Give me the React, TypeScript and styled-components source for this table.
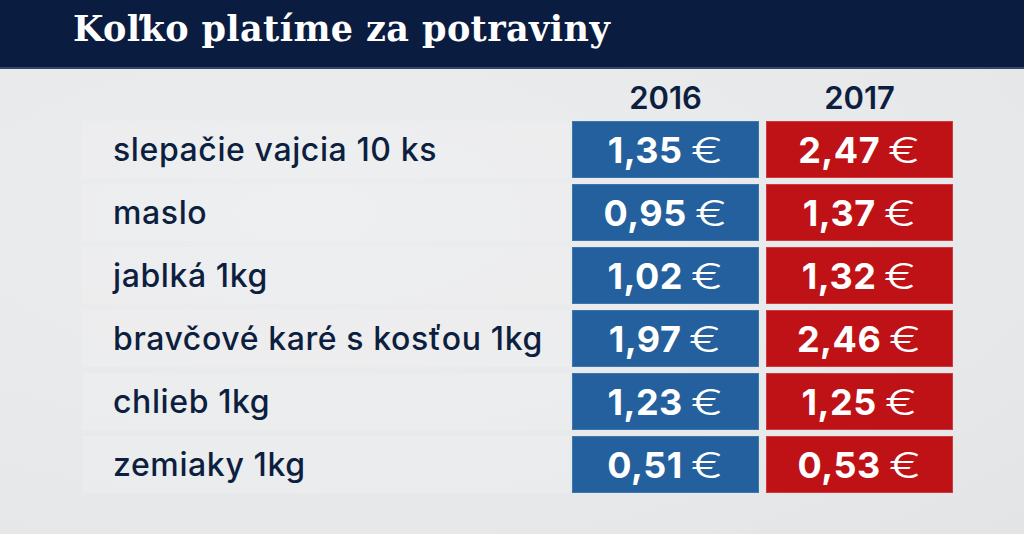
import * as React from 'react';
import styled, {createGlobalStyle} from 'styled-components';

const GlobalStyle = createGlobalStyle`
  html, body {
    margin: 0;
    padding: 0;
  }
  body {
    width: 1024px;
    height: 534px;
    overflow: hidden;
    background: #e8e9eb;
  }
`;

const Screen = styled.div`
  width: 1024px;
  height: 534px;
  display: flex;
  flex-direction: column;
  background: radial-gradient(ellipse at 30% 40%, #ecedee 0%, #e7e8ea 70%, #e3e4e6 100%);
`;

const TitleBar = styled.header`
  height: 67px;
  flex: none;
  background: #0a1d40;
  border-bottom: 2px solid #34466a;
  display: flex;
  align-items: center;
  padding-left: 73px;
`;

const Title = styled.h1`
  margin: 0;
  font-family: 'DejaVu Serif', 'Liberation Serif', serif;
  font-weight: bold;
  font-size: 35px;
  letter-spacing: 0.4px;
  color: #ffffff;
  line-height: 1;
  padding-bottom: 11px;
`;

const Table = styled.div`
  display: grid;
  grid-template-columns: 490px 187px 194px;
  grid-template-rows: 46px repeat(6, 57px);
  row-gap: 6px;
  padding-left: 82px;
`;

const Year = styled.div<{$col: number}>`
  grid-column: ${({$col}) => $col};
  display: flex;
  align-items: flex-end;
  justify-content: center;
  padding-bottom: 2px;
  padding-left: ${({$col}) => ($col === 3 ? 7 : 0)}px;
  font-family: Inter, Lato, 'Liberation Sans', sans-serif;
  font-weight: 600;
  font-size: 31px;
  line-height: 31px;
  color: #0d1f3f;
`;

const Label = styled.div`
  display: flex;
  align-items: center;
  margin-right: 2px;
  padding-left: 31px;
  background: rgba(255, 255, 255, 0.14);
  font-family: Inter, Lato, 'Liberation Sans', sans-serif;
  font-weight: 500;
  font-size: 32px;
  letter-spacing: 0.6px;
  color: #0d1f3f;
  white-space: nowrap;
`;

const Price = styled.div<{$tone: 'blue' | 'red'}>`
  display: flex;
  align-items: center;
  justify-content: center;
  margin-left: ${({$tone}) => ($tone === 'red' ? 7 : 0)}px;
  background: ${({$tone}) => ($tone === 'blue' ? '#23609d' : '#be1217')};
  box-shadow: inset 0 0 0 1px
    ${({$tone}) => ($tone === 'blue' ? '#3b76ad' : '#cf3a3e')};
  font-family: Inter, Lato, 'Liberation Sans', sans-serif;
  font-weight: 700;
  font-size: 36px;
  letter-spacing: 0.5px;
  color: #ffffff;
`;

const Euro = styled.span`
  display: inline-block;
  font-weight: 300;
  margin-left: 12px;
  margin-right: 4px;
  transform: scaleX(1.35);
`;

const rows = [
  {label: 'slepačie vajcia 10 ks', a: '1,35', b: '2,47'},
  {label: 'maslo', a: '0,95', b: '1,37'},
  {label: 'jablká 1kg', a: '1,02', b: '1,32'},
  {label: 'bravčové karé s kosťou 1kg', a: '1,97', b: '2,46'},
  {label: 'chlieb 1kg', a: '1,23', b: '1,25'},
  {label: 'zemiaky 1kg', a: '0,51', b: '0,53'}
];

export default function App() {
  return (
    <Screen>
      <GlobalStyle />
      <TitleBar>
        <Title>Koľko platíme za potraviny</Title>
      </TitleBar>
      <Table>
        <Year $col={2}>2016</Year>
        <Year $col={3}>2017</Year>
        {rows.map(row => (
          <React.Fragment key={row.label}>
            <Label>{row.label}</Label>
            <Price $tone="blue">
              {row.a}
              <Euro>€</Euro>
            </Price>
            <Price $tone="red">
              {row.b}
              <Euro>€</Euro>
            </Price>
          </React.Fragment>
        ))}
      </Table>
    </Screen>
  );
}
